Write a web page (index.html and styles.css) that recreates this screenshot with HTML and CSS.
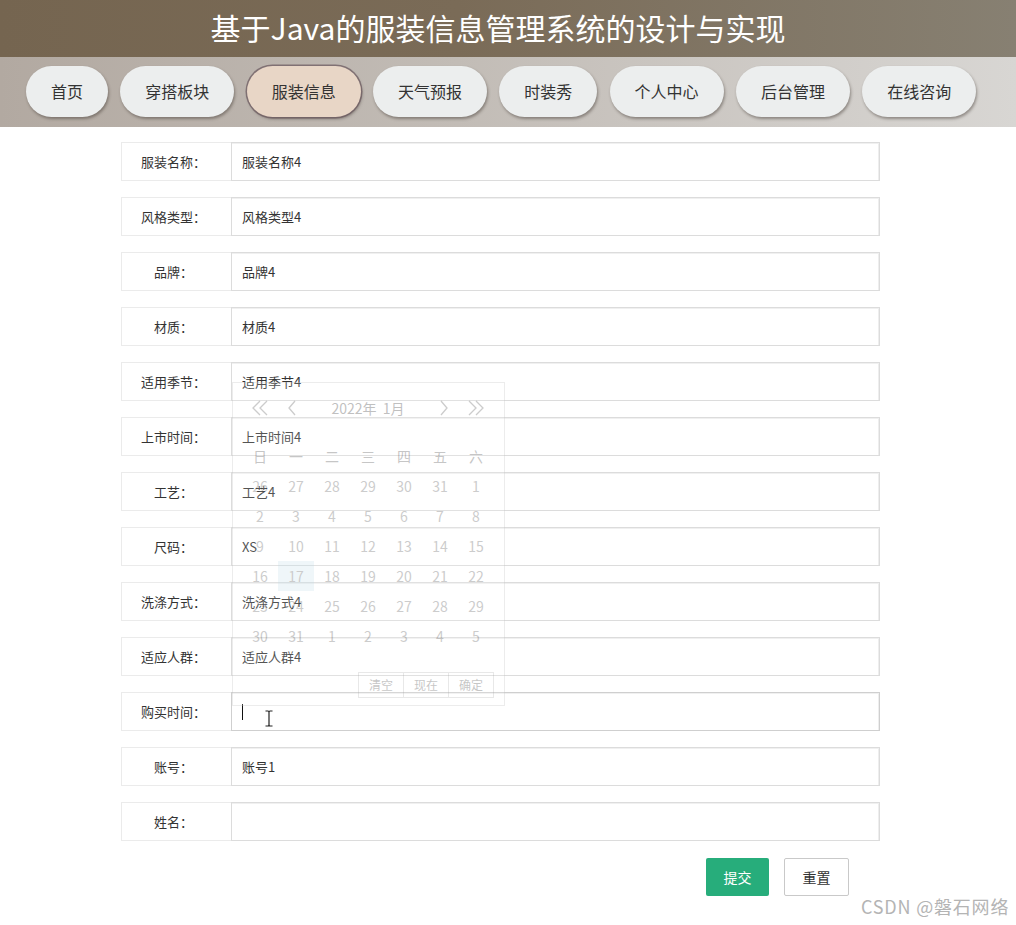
FILE: index.html
```html
<!DOCTYPE html>
<html lang="zh-CN">
<head>
<meta charset="utf-8">
<title>服装信息</title>
<link rel="stylesheet" href="styles.css">
</head>
<body>
<header class="top">
  <h1 class="title">基于Java的服装信息管理系统的设计与实现</h1>
</header>
<nav class="nav">
  <a class="nav-btn">首页</a>
  <a class="nav-btn">穿搭板块</a>
  <a class="nav-btn active">服装信息</a>
  <a class="nav-btn">天气预报</a>
  <a class="nav-btn">时装秀</a>
  <a class="nav-btn">个人中心</a>
  <a class="nav-btn">后台管理</a>
  <a class="nav-btn">在线咨询</a>
</nav>
<main class="form">
  <div class="row"><label class="lbl">服装名称：</label><div class="field">服装名称4</div></div>
  <div class="row"><label class="lbl">风格类型：</label><div class="field">风格类型4</div></div>
  <div class="row"><label class="lbl">品牌：</label><div class="field">品牌4</div></div>
  <div class="row"><label class="lbl">材质：</label><div class="field">材质4</div></div>
  <div class="row"><label class="lbl">适用季节：</label><div class="field">适用季节4</div></div>
  <div class="row"><label class="lbl">上市时间：</label><div class="field">上市时间4</div></div>
  <div class="row"><label class="lbl">工艺：</label><div class="field">工艺4</div></div>
  <div class="row"><label class="lbl">尺码：</label><div class="field">XS</div></div>
  <div class="row"><label class="lbl">洗涤方式：</label><div class="field">洗涤方式4</div></div>
  <div class="row"><label class="lbl">适应人群：</label><div class="field">适应人群4</div></div>
  <div class="row"><label class="lbl">购买时间：</label><div class="field focus"><span class="caret"></span></div></div>
  <div class="row"><label class="lbl">账号：</label><div class="field">账号1</div></div>
  <div class="row"><label class="lbl">姓名：</label><div class="field"></div></div>
  <div class="actions">
    <button class="btn primary">提交</button>
    <button class="btn plain">重置</button>
  </div>
</main>

<div class="laydate">
  <div class="ld-head">
    <span class="ld-arrow"><svg width="20" height="16" viewBox="0 0 20 16"><polyline points="9,1 2,8 9,15" /><polyline points="16,1 9,8 16,15" /></svg></span>
    <span class="ld-arrow"><svg width="10" height="16" viewBox="0 0 10 16"><polyline points="8,1 2,8 8,15" /></svg></span>
    <span class="ld-ym">2022年&nbsp;&nbsp;1月</span>
    <span class="ld-arrow"><svg width="10" height="16" viewBox="0 0 10 16"><polyline points="2,1 8,8 2,15" /></svg></span>
    <span class="ld-arrow"><svg width="20" height="16" viewBox="0 0 20 16"><polyline points="4,1 11,8 4,15" /><polyline points="11,1 18,8 11,15" /></svg></span>
  </div>
  <div class="ld-grid">
    <span class="wk">日</span><span class="wk">一</span><span class="wk">二</span><span class="wk">三</span><span class="wk">四</span><span class="wk">五</span><span class="wk">六</span>
    <span>26</span><span>27</span><span>28</span><span>29</span><span>30</span><span>31</span><span>1</span>
    <span>2</span><span>3</span><span>4</span><span>5</span><span>6</span><span>7</span><span>8</span>
    <span>9</span><span>10</span><span>11</span><span>12</span><span>13</span><span>14</span><span>15</span>
    <span>16</span><span class="today">17</span><span>18</span><span>19</span><span>20</span><span>21</span><span>22</span>
    <span>23</span><span>24</span><span>25</span><span>26</span><span>27</span><span>28</span><span>29</span>
    <span>30</span><span>31</span><span>1</span><span>2</span><span>3</span><span>4</span><span>5</span>
  </div>
  <div class="ld-foot">
    <span class="ld-fbtn">清空</span><span class="ld-fbtn">现在</span><span class="ld-fbtn">确定</span>
  </div>
</div>

<svg class="ibeam" width="10" height="17" viewBox="0 0 10 17"><path d="M1.5 1 H4 Q5 1 5 2.5 Q5 1 6 1 H8.5 M5 2.5 V14.5 M1.5 16 H4 Q5 16 5 14.5 Q5 16 6 16 H8.5" /></svg>

<div class="watermark">CSDN @磐石网络</div>
</body>
</html>
```

FILE: styles.css
```css
* { box-sizing: border-box; }
html, body { margin: 0; padding: 0; background: #fff; }
body {
  width: 1016px;
  min-height: 925px;
  position: relative;
  font-family: "Noto Sans CJK SC", "Noto Sans", "Liberation Sans", sans-serif;
  color: #333;
  overflow: hidden;
}
.top {
  height: 57px;
  background: linear-gradient(90deg, #756550 0%, #7a6b57 45%, #878072 100%);
  display: flex;
  align-items: center;
  justify-content: center;
}
.title {
  margin: 0 0 4px -20px;
  font-size: 30px;
  font-weight: 400;
  color: #fff;
  letter-spacing: 0;
  line-height: 40px;
}
.nav {
  height: 70px;
  background: linear-gradient(90deg, #b2a9a1 0%, #c2bcb6 45%, #d8d6d3 100%);
  display: flex;
  align-items: center;
  gap: 12.3px;
  padding: 0 0 2px 26px;
}
.nav-btn {
  height: 51px;
  padding: 0 25px;
  border-radius: 26px;
  background: #eceeee;
  font-size: 16px;
  line-height: 51px;
  color: #333;
  box-shadow: 1px 2px 3px rgba(60, 50, 45, 0.45);
  white-space: nowrap;
}
.nav-btn.active {
  background: #e8d6c6;
  box-shadow: 0 0 0 1.5px rgba(110, 92, 98, 0.75), 1px 2px 3px rgba(60, 50, 45, 0.5);
}
.form {
  margin: 15px 0 0 121px;
  width: 759px;
  display: flex;
  flex-direction: column;
  gap: 16px;
}
.row {
  display: flex;
  height: 39px;
}
.lbl {
  width: 110px;
  border: 1px solid #ebebeb;
  border-right: none;
  font-size: 13px;
  line-height: 37px;
  text-align: center;
  padding-right: 6px;
  color: #333;
}
.field {
  flex: 1;
  border: 1px solid #dcdcdc;
  box-shadow: inset 0 1px 0 #f0f0f0, inset -1px 0 0 #eeeeee;
  font-size: 13px;
  line-height: 37px;
  padding-left: 10px;
  color: #333;
  position: relative;
}
.field.focus { border-color: #cfcfcf; }
.caret {
  position: absolute;
  left: 10px;
  top: 11px;
  width: 1px;
  height: 16px;
  background: #111;
}
.actions {
  display: flex;
  justify-content: flex-end;
  gap: 15px;
  padding-right: 31px;
  margin-top: 1px;
}
.btn {
  font-family: inherit;
  font-size: 14px;
  height: 38px;
  border-radius: 2px;
  padding: 0;
}
.btn.primary {
  width: 63px;
  background: #27ad7b;
  border: none;
  color: #fff;
}
.btn.plain {
  width: 65px;
  background: #fff;
  border: 1px solid #c9c9c9;
  color: #333;
}
.laydate {
  position: absolute;
  left: 232px;
  top: 382px;
  width: 273px;
  height: 324px;
  border: 1px solid #c8c8c8;
  background: rgba(255, 255, 255, 0.5);
  padding: 10px 9px 0 9px;
  opacity: 0.33;
  color: #555;
}
.ld-head {
  display: flex;
  height: 30px;
  align-items: center;
}
.ld-arrow {
  display: flex;
  justify-content: center;
  align-items: center;
}
.ld-arrow:nth-child(1), .ld-arrow:nth-child(5) { width: 38px; }
.ld-arrow:nth-child(2), .ld-arrow:nth-child(4) { width: 24px; }
.ld-arrow svg polyline { fill: none; stroke: #666; stroke-width: 1.3; }
.ld-ym {
  width: 128px;
  text-align: center;
  font-size: 14px;
  color: #444;
}
.ld-grid {
  margin-top: 18px;
  display: grid;
  grid-template-columns: repeat(7, 36px);
  grid-auto-rows: 30px;
  font-size: 14px;
  color: #666;
}
.ld-grid span {
  display: flex;
  align-items: center;
  justify-content: center;
}
.ld-grid .wk { color: #555; }
.ld-grid .today { background: #cfe6ef; }
.ld-foot {
  margin-top: 21px;
  display: flex;
  justify-content: flex-end;
  padding-right: 1px;
}
.ld-fbtn {
  width: 46px;
  height: 26px;
  border: 1px solid #bbb;
  margin-left: -1px;
  font-size: 12px;
  line-height: 24px;
  text-align: center;
  color: #555;
}
.ibeam {
  position: absolute;
  left: 264px;
  top: 710px;
}
.ibeam path { fill: none; stroke: #222; stroke-width: 1.2; }
.watermark {
  position: absolute;
  left: 861px;
  top: 893px;
  font-size: 18px;
  color: #b4b4b4;
  font-family: "Noto Sans CJK SC", "Liberation Sans", sans-serif;
  white-space: nowrap;
  letter-spacing: 0.8px;
}
```
